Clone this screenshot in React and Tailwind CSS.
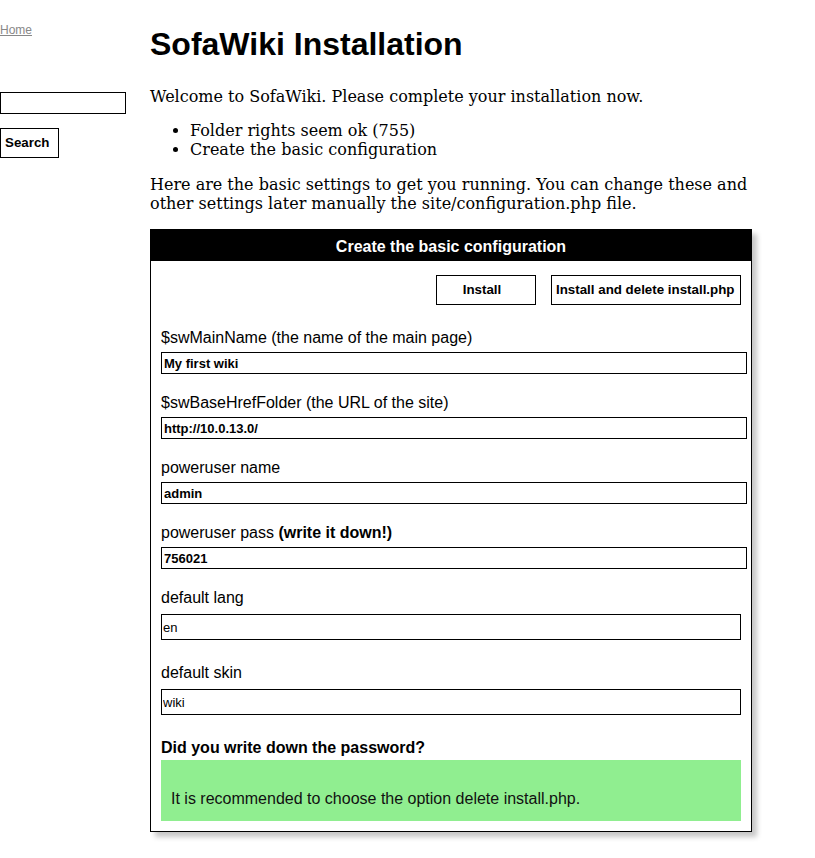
import React from "react";

function Row({ label, value, mtLabel, wide = true }) {
  return (
    <div>
      <div className={`${mtLabel} text-[16px] leading-[18px] text-black`}>{label}</div>
      {wide ? (
        <input
          readOnly
          value={value}
          className="mt-[5px] block h-[22px] w-[586px] border border-black bg-white px-[2px] text-[13px] font-bold text-black outline-none font-['Liberation_Sans']"
        />
      ) : (
        <input
          readOnly
          value={value}
          className="mt-[7px] block h-[26px] w-[580px] border border-black bg-white px-[1px] text-[13px] text-black outline-none font-['Liberation_Sans']"
        />
      )}
    </div>
  );
}

export default function App() {
  return (
    <div className="flex min-h-[858px] bg-white font-['Liberation_Sans',Arial,sans-serif] text-black">
      <div className="w-[150px] shrink-0 pt-[23px]">
        <a href="#" className="block text-[12px] leading-[14px] text-[#888] underline">
          Home
        </a>
        <input
          readOnly
          value=""
          className="mt-[55px] block h-[22px] w-[126px] border border-black bg-white outline-none"
        />
        <button className="mt-[14px] block h-[30px] w-[59px] border border-black bg-white pl-[4px] text-left text-[13.33px] font-bold text-black">
          Search
        </button>
      </div>
      <div className="w-[602px] shrink-0">
        <h1 className="mt-[26px] text-[32px] font-bold leading-[37px]">SofaWiki Installation</h1>
        <div className="font-['DejaVu_Serif',serif] text-[16px] leading-[19px]">
          <p className="mt-[24px]">Welcome to SofaWiki. Please complete your installation now.</p>
          <ul className="mt-[15px] list-disc pl-[40px]">
            <li>Folder rights seem ok (755)</li>
            <li>Create the basic configuration</li>
          </ul>
          <p className="mt-[16px] w-[600px]">
            Here are the basic settings to get you running. You can change these and other settings later manually the site/configuration.php file.
          </p>
        </div>
        <div className="mt-[16px] w-[602px] border border-black bg-white shadow-[5px_5px_5px_#c8c8c8]">
          <div className="h-[31px] bg-black pt-[2px] text-center text-[16px] font-bold leading-[29px] text-white">
            Create the basic configuration
          </div>
          <div className="px-[10px] pb-[10px]">
            <div className="flex justify-end gap-[15px] pt-[14px]">
              <button className="h-[30px] w-[100px] border border-black bg-white pr-[8px] text-center text-[13.33px] font-bold">
                Install
              </button>
              <button className="h-[30px] w-[190px] border border-black bg-white pl-[4px] text-left text-[13.33px] font-bold">
                Install and delete install.php
              </button>
            </div>
            <Row mtLabel="mt-[24px]" label="$swMainName (the name of the main page)" value="My first wiki" />
            <Row mtLabel="mt-[20px]" label="$swBaseHrefFolder (the URL of the site)" value="http://10.0.13.0/" />
            <Row mtLabel="mt-[20px]" label="poweruser name" value="admin" />
            <Row
              mtLabel="mt-[20px]"
              label={
                <>
                  poweruser pass <b>(write it down!)</b>
                </>
              }
              value="756021"
            />
            <Row mtLabel="mt-[20px]" label="default lang" value="en" wide={false} />
            <Row mtLabel="mt-[24px]" label="default skin" value="wiki" wide={false} />
            <div className="mt-[24px] text-[16px] font-bold leading-[18px]">Did you write down the password?</div>
            <div className="mt-[3px] bg-[#90ee90] px-[10px] pb-[13px] pt-[30px] text-[16px] leading-[18px] text-[#111]">
              It is recommended to choose the option delete install.php.
            </div>
          </div>
        </div>
      </div>
    </div>
  );
}
